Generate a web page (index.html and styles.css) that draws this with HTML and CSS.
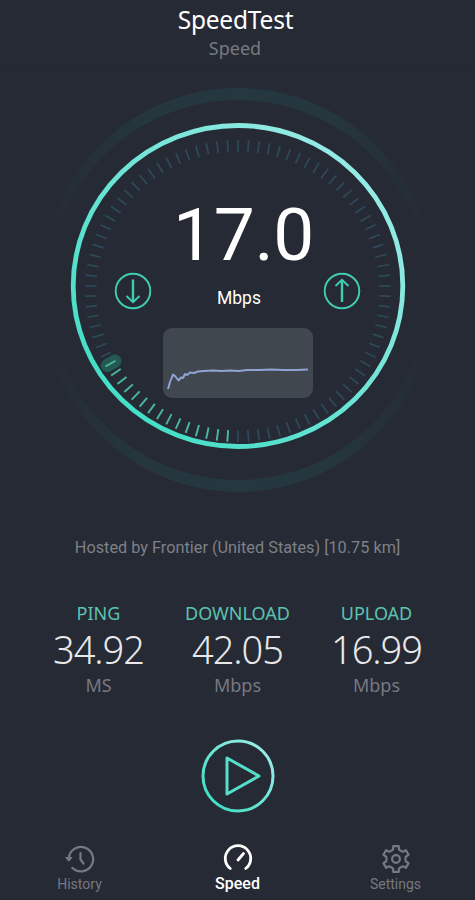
FILE: index.html
```html
<!DOCTYPE html>
<html lang="en">
<head>
    <meta charset="UTF-8">
    <title>SpeedTest</title>
    <link rel="stylesheet" href="styles.css">
</head>
<body>
    <div class="app">
        <header class="header">
            <h1>SpeedTest</h1>
            <p>Speed</p>
        </header>

        <div class="dial">
            <svg class="dial-bg" viewBox="0 0 475 440">
                <defs>
                    <linearGradient id="ringColor" x1="0.15" y1="0.85" x2="0.85" y2="0.15">
                        <stop offset="0" stop-color="#45dec6"/>
                        <stop offset="1" stop-color="#94eae5"/>
                    </linearGradient>
                    <linearGradient id="haloColor" x1="0" y1="0" x2="1" y2="0">
                        <stop offset="0" stop-color="#25383f" stop-opacity="0"/>
                        <stop offset="0.25" stop-color="#25383f" stop-opacity="0.85"/>
                        <stop offset="0.5" stop-color="#25383f"/>
                        <stop offset="0.75" stop-color="#25383f" stop-opacity="0.85"/>
                        <stop offset="1" stop-color="#25383f" stop-opacity="0"/>
                    </linearGradient>
                </defs>
                <path fill="url(#haloColor)" fill-rule="evenodd" d="M40 222a198 202 0 1 0 396 0a198 202 0 1 0 -396 0zM48 222a190 190 0 1 0 380 0a190 190 0 1 0 -380 0z"/>
                <g id="ticks"></g>
                <ellipse cx="238" cy="218" rx="164.8" ry="160.5" fill="none" stroke="url(#ringColor)" stroke-width="4.8"/>
            </svg>

            <div class="speed-value">17.0</div>
            <div class="dial-row">
                <svg class="arrow" viewBox="0 0 38 38">
                    <circle cx="19" cy="19" r="17.3"/>
                    <path d="M19 7.5V30" stroke-width="2.4"/>
                    <path d="M12.5 24L19 30.3L25.5 24"/>
                </svg>
                <span class="speed-unit">Mbps</span>
                <svg class="arrow" viewBox="0 0 38 38">
                    <circle cx="19" cy="19" r="17.3"/>
                    <path d="M19 30V8" stroke-width="2.4"/>
                    <path d="M12.5 14L19 7.7L25.5 14"/>
                </svg>
            </div>
            <div class="graph">
                <svg viewBox="0 0 150 70">
                    <path d="M5 61L7 54L10 46.5L12 48L15.5 52.5L18 49.5L20 50L22 46L24 47L27 44.5L31 45L35 43.5L41 43L50 42.5L58 43L67 42.5L76 43L84 42L97 42L108 41.5L120 42L133 42L145 41.5"/>
                </svg>
            </div>
        </div>

        <p class="host">Hosted by Frontier (United States) [10.75 km]</p>

        <div class="results">
            <div class="result">
                <h2>PING</h2>
                <strong>34.92</strong>
                <span>MS</span>
            </div>
            <div class="result">
                <h2>DOWNLOAD</h2>
                <strong>42.05</strong>
                <span>Mbps</span>
            </div>
            <div class="result">
                <h2>UPLOAD</h2>
                <strong>16.99</strong>
                <span>Mbps</span>
            </div>
        </div>

        <button class="play-btn" aria-label="Start">
            <svg viewBox="0 0 74 74">
                <circle cx="37" cy="37" r="35" stroke="url(#ringColor)"/>
                <path d="M26 19V55L58 37Z" stroke="#55dfcb"/>
            </svg>
        </button>

        <nav class="nav">
            <a class="nav-item">
                <svg viewBox="0 0 32 32">
                    <path d="M4.8 15A12.2 12.2 0 1 1 8.3 24.8"/>
                    <path d="M16.5 10V16.5L19.5 20.5"/>
                    <path class="solid" d="M2 14.5H8L5 18Z"/>
                </svg>
                <span>History</span>
            </a>
            <a class="nav-item active">
                <svg viewBox="0 0 32 32">
                    <path d="M8.3 25.5A12.7 12.7 0 1 1 23.7 25.5"/>
                    <path d="M16 17L21.5 10.5"/>
                </svg>
                <span>Speed</span>
            </a>
            <a class="nav-item">
                <svg viewBox="0 0 32 32">
                    <path id="gear"/>
                    <circle cx="16" cy="16" r="3.9"/>
                </svg>
                <span>Settings</span>
            </a>
        </nav>
    </div>

    <script>
        const TICKS = 90;
        const LIT = 15;
        const NS = 'http://www.w3.org/2000/svg';
        const ticks = document.getElementById('ticks');

        function addLine(angle, inner, outer, cls) {
            const line = document.createElementNS(NS, 'line');
            const sin = -Math.sin(angle);
            const cos = Math.cos(angle);
            line.setAttribute('x1', 238 + sin * (inner + 2));
            line.setAttribute('y1', 223 + cos * inner);
            line.setAttribute('x2', 238 + sin * (outer + 2));
            line.setAttribute('y2', 223 + cos * outer);
            line.setAttribute('class', cls);
            ticks.appendChild(line);
        }

        // scale starts at the bottom and runs clockwise
        for (let i = 0; i < TICKS; i++) {
            const angle = i * 2 * Math.PI / TICKS;
            if (i === LIT) addLine(angle, 140, 149, 'tick-glow');
            const lit = i > 0 && i <= LIT;
            addLine(angle, 139.5, 151, lit ? 'tick lit' : 'tick');
        }

        // six-tooth gear outline
        const points = [];
        for (let i = 0; i < 6; i++) {
            const base = i * 60 - 90;
            [[-25, 9.6], [-17, 10], [-12, 13.2], [12, 13.2], [17, 10], [25, 9.6]].forEach(([deg, r]) => {
                const a = (base + deg) * Math.PI / 180;
                points.push((16 + r * Math.cos(a)).toFixed(2) + ' ' + (16 + r * Math.sin(a)).toFixed(2));
            });
        }
        document.getElementById('gear').setAttribute('d', 'M' + points.join('L') + 'Z');
    </script>
</body>
</html>
```
FILE: styles.css
```css
* {
    box-sizing: border-box;
}
body {
    margin: 0;
    background: #262a34;
    color: #fff;
    font-family: "Noto Sans", "Open Sans", sans-serif;
}
h1, h2, p {
    margin: 0;
    font-weight: 400;
}
.app {
    width: 475px;
    height: 900px;
    display: flex;
    flex-direction: column;
    align-items: center;
    overflow: hidden;
}
.header {
    width: 100%;
    height: 68px;
    padding-top: 4px;
    text-align: center;
    border-bottom: 1px solid #232730;
}
.header h1 {
    font-size: 24.5px;
    line-height: 32px;
    letter-spacing: -0.2px;
    padding-right: 4px;
}
.header p {
    font-size: 18px;
    line-height: 24px;
    padding-right: 5px;
    color: #777a82;
}
.dial {
    position: relative;
    width: 475px;
    height: 440px;
    display: flex;
    flex-direction: column;
    align-items: center;
}
.dial-bg {
    position: absolute;
    top: 0;
    left: 0;
    width: 475px;
    height: 440px;
}
.tick {
    stroke: #2e4a5a;
    stroke-width: 1.7;
}
.tick.lit {
    stroke: #48b9a0;
    stroke-width: 1.9;
}
.tick-glow {
    stroke: #245951;
    stroke-width: 13;
    stroke-linecap: round;
}
.speed-value {
    margin-top: 130px;
    padding-left: 12px;
    font: 400 73px/74px Roboto, sans-serif;
    letter-spacing: -0.3px;
}
.dial-row {
    width: 247px;
    height: 38px;
    display: flex;
    justify-content: space-between;
    align-items: center;
}
.arrow {
    width: 38px;
    height: 38px;
    fill: none;
    stroke: #41cdb0;
    stroke-width: 1.9;
}
.speed-unit {
    font: 400 17.5px/20px Roboto, sans-serif;
    padding: 13px 0 0 3px;
}
.graph {
    width: 150px;
    height: 70px;
    margin-top: 17.5px;
    margin-left: 1px;
    border-radius: 9px;
    background: #41474e;
}
.graph svg {
    display: block;
    fill: none;
    stroke: #8fa4d3;
    stroke-width: 2;
    stroke-linejoin: round;
}
.host {
    margin-top: 30px;
    font: 400 16.3px/20px Roboto, sans-serif;
    color: #7e8188;
}
.results {
    width: 417px;
    margin-top: 43px;
    display: grid;
    grid-template-columns: repeat(3, 1fr);
}
.result {
    display: flex;
    flex-direction: column;
    align-items: center;
}
.result h2 {
    font-size: 18px;
    line-height: 24px;
    color: #5ac3b1;
}
.result strong {
    font-size: 38px;
    font-weight: 300;
    line-height: 48px;
    letter-spacing: -1px;
    color: #e8e8ea;
}
.result span {
    font-size: 18px;
    line-height: 24px;
    color: #767981;
}
.play-btn {
    width: 74px;
    height: 74px;
    margin-top: 42px;
    padding: 0;
    border: none;
    background: none;
}
.play-btn svg {
    display: block;
    fill: none;
    stroke-width: 3;
    stroke-linejoin: round;
}
.nav {
    width: 474px;
    margin-top: 30px;
    display: grid;
    grid-template-columns: repeat(3, 1fr);
}
.nav-item {
    display: flex;
    flex-direction: column;
    align-items: center;
    color: #767981;
    font: 400 14px/18px Roboto, sans-serif;
}
.nav-item svg {
    width: 32px;
    height: 32px;
    fill: none;
    stroke: currentColor;
    stroke-width: 2.2;
    stroke-linecap: round;
    stroke-linejoin: round;
}
.nav-item .solid {
    fill: currentColor;
    stroke-width: 1;
}
.nav-item.active {
    color: #fff;
    font-size: 16px;
    font-weight: 500;
}
.nav-item.active svg {
    stroke-width: 2.8;
}
```
